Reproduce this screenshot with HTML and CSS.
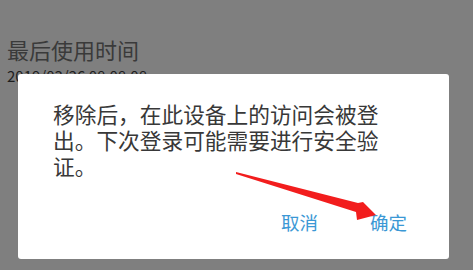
FILE: index.html
```html
<!DOCTYPE html>
<html lang="zh-CN">
<head>
    <meta charset="UTF-8">
    <title>移除设备</title>
    <link rel="stylesheet" href="styles.css">
</head>
<body>

<div class="page">
    <div class="info-block">
        <h2 class="info-label">最后使用时间</h2>
        <p class="info-value">2019/03/26 08:08:08</p>
    </div>
</div>

<div class="dialog">
    <p class="dialog-msg">移除后，在此设备上的访问会被登出。下次登录可能需要进行安全验证。</p>
    <div class="dialog-actions">
        <span class="dialog-btn">取消</span>
        <span class="dialog-btn">确定</span>
    </div>
</div>

<svg class="mark-arrow" width="473" height="270" viewBox="0 0 473 270">
    <polygon points="236,172 358,203 363,202 376,215 357,220 356,212 236,174" fill="#f21d1d"/>
</svg>

</body>
</html>
```

FILE: styles.css
```css
body {
    margin: 0;
    width: 473px;
    height: 270px;
    overflow: hidden;
    background-color: #7f7f7f;
    font-family: "Noto Sans CJK SC", "Noto Sans", sans-serif;
    position: relative;
}
.page {
    padding: 35px 0 0 7px;
}
.info-label {
    margin: 0;
    font-size: 22px;
    line-height: 28px;
    font-weight: normal;
    color: #3a3a3a;
}
.info-value {
    margin: 3px 0 0 0;
    font-size: 15px;
    line-height: 20px;
    color: #1e1e1e;
}
.dialog {
    position: absolute;
    left: 18px;
    top: 74px;
    width: 431px;
    height: 185px;
    box-sizing: border-box;
    padding: 27px 42px 25px 35px;
    background-color: #ffffff;
    border-radius: 3px;
    display: flex;
    flex-direction: column;
}
.dialog-msg {
    margin: 0;
    width: 340px;
    font-size: 21.7px;
    line-height: 26px;
    color: #383838;
}
.dialog-actions {
    display: flex;
    justify-content: flex-end;
    gap: 52px;
    margin-top: auto;
}
.dialog-btn {
    font-size: 18.5px;
    line-height: 24px;
    color: #3b98d5;
}
.mark-arrow {
    position: absolute;
    left: 0;
    top: 0;
}
```
